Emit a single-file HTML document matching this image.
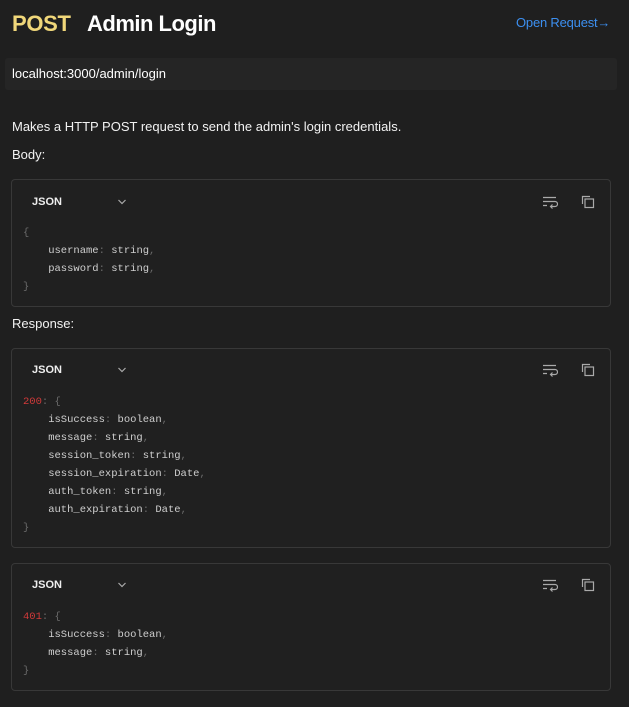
<!DOCTYPE html>
<html><head><meta charset="utf-8"><style>
*{margin:0;padding:0;box-sizing:border-box}
body{width:629px;height:707px;background:#1f1f1f;font-family:"Liberation Sans",sans-serif;color:#f2f2f2;position:relative;overflow:hidden}
.a{position:absolute;white-space:nowrap}
.box{position:absolute;left:11px;width:600px;border:1px solid #383838;border-radius:4px;background:#202020}
.json{position:absolute;left:20px;font-size:11px;font-weight:bold;color:#eee}
.chev{position:absolute;left:105px;}
.ic{position:absolute}
.code{position:absolute;left:11px;font-family:"Liberation Mono",monospace;font-size:10.5px;line-height:18px;color:#cfcfcf;white-space:pre}
.p{color:#6a6a6a}.n{color:#d23a3a}
</style></head><body>
<div class="a" style="left:12px;top:11px;font-size:22px;font-weight:bold;color:#f0d77a;letter-spacing:-0.3px">POST</div>
<div class="a" style="left:87px;top:11px;font-size:22px;font-weight:bold;color:#fff;letter-spacing:-0.5px">Admin Login</div>
<div class="a" style="left:516px;top:15px;font-size:13px;color:#3c8ff0;letter-spacing:-0.2px">Open Request→</div>
<div class="a" style="left:5px;top:58px;width:612px;height:32px;background:#252525;border-radius:3px"></div>
<div class="a" style="left:12px;top:66px;font-size:13px;color:#fff">localhost:3000/admin/login</div>
<div class="a" style="left:12px;top:119px;font-size:13px">Makes a HTTP POST request to send the admin's login credentials.</div>
<div class="a" style="left:12px;top:147px;font-size:13px">Body:</div>
<div class="a" style="left:12px;top:316px;font-size:13px">Response:</div>

<div class="box" style="top:179px;height:128px">
 <div class="json" style="top:16px">JSON</div>
 <svg class="chev" style="top:18px" width="10" height="8"><path d="M1.5 2l3.5 3.5L8.5 2" stroke="#aaa" fill="none" stroke-width="1.2"/></svg>
 <svg class="ic" style="left:530px;top:15px" width="16" height="14"><path d="M1 2.5h13M1 6.5h12a2.5 2.5 0 0 1 0 5H9M10.5 9.5L8.5 11.5l2 2M1 10.5h4" stroke="#aaa" fill="none" stroke-width="1.2"/></svg>
 <svg class="ic" style="left:569px;top:15px" width="14" height="14"><path d="M1.5 9V1.5H9" stroke="#aaa" fill="none" stroke-width="1.2"/><rect x="4" y="4" width="8.5" height="8.5" stroke="#aaa" fill="none" stroke-width="1.2"/></svg>
 <div class="code" style="top:44px"><span class="p">{</span>
    username<span class="p">:</span> string<span class="p">,</span>
    password<span class="p">:</span> string<span class="p">,</span>
<span class="p">}</span></div>
</div>

<div class="box" style="top:348px;height:200px">
 <div class="json" style="top:15px">JSON</div>
 <svg class="chev" style="top:17px" width="10" height="8"><path d="M1.5 2l3.5 3.5L8.5 2" stroke="#aaa" fill="none" stroke-width="1.2"/></svg>
 <svg class="ic" style="left:530px;top:14px" width="16" height="14"><path d="M1 2.5h13M1 6.5h12a2.5 2.5 0 0 1 0 5H9M10.5 9.5L8.5 11.5l2 2M1 10.5h4" stroke="#aaa" fill="none" stroke-width="1.2"/></svg>
 <svg class="ic" style="left:569px;top:14px" width="14" height="14"><path d="M1.5 9V1.5H9" stroke="#aaa" fill="none" stroke-width="1.2"/><rect x="4" y="4" width="8.5" height="8.5" stroke="#aaa" fill="none" stroke-width="1.2"/></svg>
 <div class="code" style="top:44px"><span class="n">200</span><span class="p">: {</span>
    isSuccess<span class="p">:</span> boolean<span class="p">,</span>
    message<span class="p">:</span> string<span class="p">,</span>
    session_token<span class="p">:</span> string<span class="p">,</span>
    session_expiration<span class="p">:</span> Date<span class="p">,</span>
    auth_token<span class="p">:</span> string<span class="p">,</span>
    auth_expiration<span class="p">:</span> Date<span class="p">,</span>
<span class="p">}</span></div>
</div>

<div class="box" style="top:563px;height:128px">
 <div class="json" style="top:15px">JSON</div>
 <svg class="chev" style="top:17px" width="10" height="8"><path d="M1.5 2l3.5 3.5L8.5 2" stroke="#aaa" fill="none" stroke-width="1.2"/></svg>
 <svg class="ic" style="left:530px;top:14px" width="16" height="14"><path d="M1 2.5h13M1 6.5h12a2.5 2.5 0 0 1 0 5H9M10.5 9.5L8.5 11.5l2 2M1 10.5h4" stroke="#aaa" fill="none" stroke-width="1.2"/></svg>
 <svg class="ic" style="left:569px;top:14px" width="14" height="14"><path d="M1.5 9V1.5H9" stroke="#aaa" fill="none" stroke-width="1.2"/><rect x="4" y="4" width="8.5" height="8.5" stroke="#aaa" fill="none" stroke-width="1.2"/></svg>
 <div class="code" style="top:44px"><span class="n">401</span><span class="p">: {</span>
    isSuccess<span class="p">:</span> boolean<span class="p">,</span>
    message<span class="p">:</span> string<span class="p">,</span>
<span class="p">}</span></div>
</div>
</body></html>
